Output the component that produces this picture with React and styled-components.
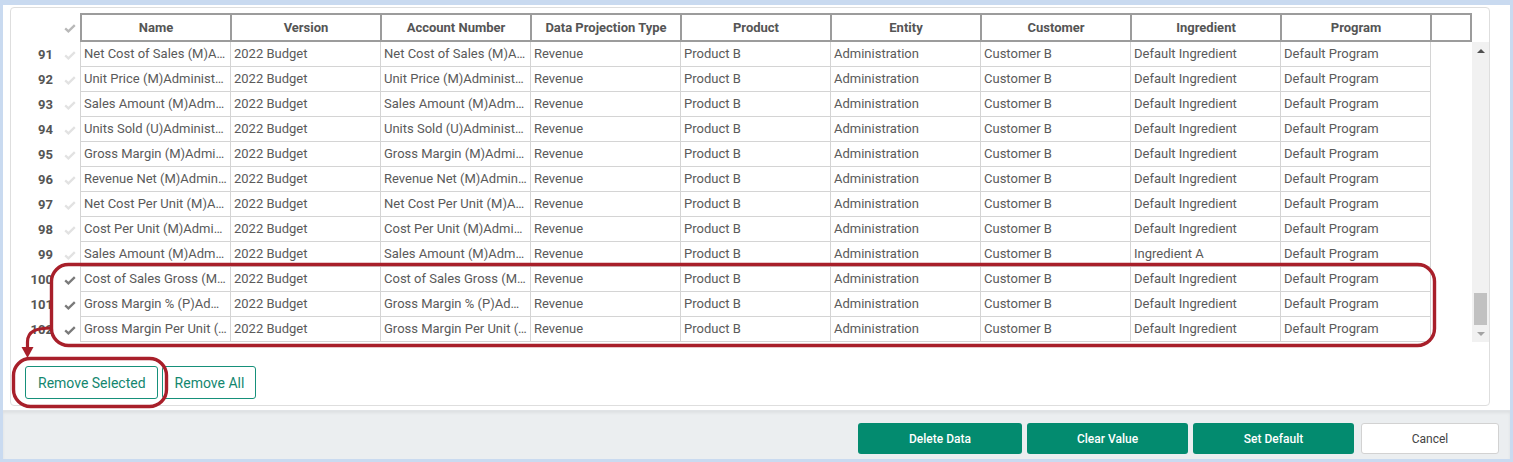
import React from "react";
import styled, { createGlobalStyle } from "styled-components";

const GlobalStyle = createGlobalStyle`
  body {
    margin: 0;
    background: #c9daf0;
    font-family: Roboto, "Liberation Sans", Arial, sans-serif;
  }
`;

const columns = [
  "Name",
  "Version",
  "Account Number",
  "Data Projection Type",
  "Product",
  "Entity",
  "Customer",
  "Ingredient",
  "Program",
];

const rows = [
  { no: 91, name: "Net Cost of Sales (M)Administration" },
  { no: 92, name: "Unit Price (M)Administration" },
  { no: 93, name: "Sales Amount (M)Administration" },
  { no: 94, name: "Units Sold (U)Administration" },
  { no: 95, name: "Gross Margin (M)Administration" },
  { no: 96, name: "Revenue Net (M)Administration" },
  { no: 97, name: "Net Cost Per Unit (M)Administration" },
  { no: 98, name: "Cost Per Unit (M)Administration" },
  { no: 99, name: "Sales Amount (M)Administration", ingredient: "Ingredient A" },
  { no: 100, name: "Cost of Sales Gross (M)Administration", checked: true },
  { no: 101, name: "Gross Margin % (P)Administration", checked: true },
  { no: 102, name: "Gross Margin Per Unit (M)Administration", checked: true },
];

const Check = ({ color }) => (
  <svg width="12" height="9" viewBox="0 0 12 9">
    <polyline
      points="1.2,4.4 4.4,7.4 10.8,1.2"
      fill="none"
      stroke={color}
      strokeWidth="2.3"
    />
  </svg>
);

const App = () => {
  return (
    <Page>
      <GlobalStyle />
      <Window>
        <Content>
          <Panel>
            <HeaderRow>
              <Gutter>
                <NumCell />
                <CheckCell>
                  <Check color="#b8b8b8" />
                </CheckCell>
              </Gutter>
              <HeaderTable>
                {columns.map((c) => (
                  <HeadCell key={c}>{c}</HeadCell>
                ))}
                <HeadCell width={40} />
              </HeaderTable>
            </HeaderRow>
            <Body>
              <RowsColumn>
                {rows.map((r) => (
                  <Row key={r.no}>
                    <Gutter>
                      <NumCell>{r.no}</NumCell>
                      <CheckCell>
                        <Check color={r.checked ? "#7a7a7a" : "#e2e2e2"} />
                      </CheckCell>
                    </Gutter>
                    <Cell>{r.name}</Cell>
                    <Cell>2022 Budget</Cell>
                    <Cell>{r.name}</Cell>
                    <Cell>Revenue</Cell>
                    <Cell>Product B</Cell>
                    <Cell>Administration</Cell>
                    <Cell>Customer B</Cell>
                    <Cell>{r.ingredient || "Default Ingredient"}</Cell>
                    <Cell last>Default Program</Cell>
                  </Row>
                ))}
              </RowsColumn>
              <BodySpacer />
              <Scrollbar>
                <ScrollArrow>
                  <ArrowUp />
                </ScrollArrow>
                <Track>
                  <Thumb />
                </Track>
                <ScrollArrow>
                  <ArrowDown />
                </ScrollArrow>
              </Scrollbar>
            </Body>
            <Actions>
              <OutlineButton>Remove Selected</OutlineButton>
              <OutlineButton>Remove All</OutlineButton>
            </Actions>
          </Panel>
        </Content>
        <Footer>
          <FillButton width={164}>Delete Data</FillButton>
          <FillButton width={161}>Clear Value</FillButton>
          <FillButton width={161}>Set Default</FillButton>
          <CancelButton>Cancel</CancelButton>
        </Footer>
      </Window>
      <Annotation width="1513" height="462" viewBox="0 0 1513 462">
        <rect
          x="51.5"
          y="264.5"
          width="1383"
          height="81"
          rx="17"
          fill="none"
          stroke="#a81f2a"
          strokeWidth="3.4"
        />
        <rect
          x="13.5"
          y="358.5"
          width="153"
          height="48"
          rx="17"
          fill="none"
          stroke="#a81f2a"
          strokeWidth="3.4"
        />
        <path
          d="M52 328 C 36 328, 27.5 331, 27.5 342 L 27.5 349"
          fill="none"
          stroke="#a81f2a"
          strokeWidth="3.2"
        />
        <polygon points="21.5,347 33.5,347 27.5,358" fill="#a81f2a" />
      </Annotation>
    </Page>
  );
};

export default App;

const Page = styled.div`
  position: relative;
  width: 1513px;
  height: 462px;
  box-sizing: border-box;
  padding: 5px 3px 3px 3px;
`;

const Window = styled.div`
  background: #ffffff;
  height: 100%;
  display: flex;
  flex-direction: column;
`;

const Content = styled.div`
  padding: 2px 20px 4px 7px;
`;

const Panel = styled.div`
  width: 1480px;
  box-sizing: border-box;
  border: 1px solid #dedede;
  border-radius: 4px;
  padding: 5px 0 6px 0;
  background: #fff;
`;

const HeaderRow = styled.div`
  display: flex;
  align-items: stretch;
`;

const Gutter = styled.div`
  display: flex;
  width: 69px;
  flex: none;
  align-items: center;
`;

const NumCell = styled.div`
  width: 49px;
  box-sizing: border-box;
  padding-right: 7px;
  text-align: right;
  font-size: 13px;
  font-weight: 700;
  color: #555;
`;

const CheckCell = styled.div`
  width: 20px;
  display: flex;
  justify-content: center;
  align-items: center;
  padding-top: 1px;
`;

const HeaderTable = styled.div`
  display: flex;
  border: 2px solid #9c9c9c;
  border-right: none;
  height: 25px;
`;

const HeadCell = styled.div`
  width: ${({ width }) => width || 150}px;
  box-sizing: border-box;
  border-right: 2px solid #9c9c9c;
  display: flex;
  align-items: center;
  justify-content: center;
  font-size: 13px;
  font-weight: 700;
  color: #555;
  white-space: nowrap;
`;

const Body = styled.div`
  display: flex;
`;

const RowsColumn = styled.div`
  display: flex;
  flex-direction: column;
  width: 1420px;
`;

const Row = styled.div`
  display: flex;
  height: 25px;
`;

const Cell = styled.div`
  width: ${({ last }) => (last ? 151 : 150)}px;
  box-sizing: border-box;
  border-left: 1px solid #d4d4d4;
  border-right: ${({ last }) => (last ? "1px solid #d4d4d4" : "none")};
  border-bottom: 1px solid #d4d4d4;
  padding: 0 3px 0 3px;
  font-size: 13px;
  line-height: 24px;
  color: #5a5a5a;
  white-space: nowrap;
  overflow: hidden;
  text-overflow: ellipsis;
`;

const BodySpacer = styled.div`
  width: 41px;
`;

const Scrollbar = styled.div`
  width: 17px;
  background: #f1f1f1;
  display: flex;
  flex-direction: column;
`;

const ScrollArrow = styled.div`
  height: 17px;
  display: flex;
  align-items: center;
  justify-content: center;
`;

const ArrowUp = styled.div`
  width: 0;
  height: 0;
  border-left: 4px solid transparent;
  border-right: 4px solid transparent;
  border-bottom: 4px solid #505050;
`;

const ArrowDown = styled.div`
  width: 0;
  height: 0;
  border-left: 4px solid transparent;
  border-right: 4px solid transparent;
  border-top: 4px solid #a3a3a3;
`;

const Track = styled.div`
  flex: 1;
  display: flex;
  flex-direction: column;
  justify-content: flex-end;
  align-items: center;
`;

const Thumb = styled.div`
  width: 13px;
  height: 32px;
  background: #c1c1c1;
`;

const Actions = styled.div`
  display: flex;
  gap: 4px;
  margin: 24px 0 0 14px;
`;

const OutlineButton = styled.button`
  height: 33px;
  padding: 0 11px 0 12px;
  background: #fff;
  border: 1px solid #16907a;
  border-radius: 3px;
  color: #13876f;
  font-family: Roboto, "Liberation Sans", Arial, sans-serif;
  font-size: 14px;
  cursor: pointer;
`;

const Footer = styled.div`
  flex: 1;
  display: flex;
  justify-content: flex-end;
  align-items: flex-start;
  gap: 5px;
  padding: 12px 11px 0 0;
  background: #ebeef0;
  border-top: 1px solid #e0e3e6;
  box-shadow: inset 0 2px 3px rgba(0, 0, 0, 0.06);
`;

const FillButton = styled.button`
  width: ${({ width }) => width}px;
  height: 31px;
  background: #038b6f;
  border: none;
  border-radius: 3px;
  color: #fff;
  font-family: Roboto, "Liberation Sans", Arial, sans-serif;
  font-size: 12px;
  font-weight: 500;
  cursor: pointer;
`;

const CancelButton = styled.button`
  width: 138px;
  height: 31px;
  margin-left: 2px;
  background: #fff;
  border: 1px solid #d2d2d2;
  border-radius: 3px;
  color: #444;
  font-family: Roboto, "Liberation Sans", Arial, sans-serif;
  font-size: 12px;
  cursor: pointer;
`;

const Annotation = styled.svg`
  position: absolute;
  left: 0;
  top: 0;
  pointer-events: none;
`;
